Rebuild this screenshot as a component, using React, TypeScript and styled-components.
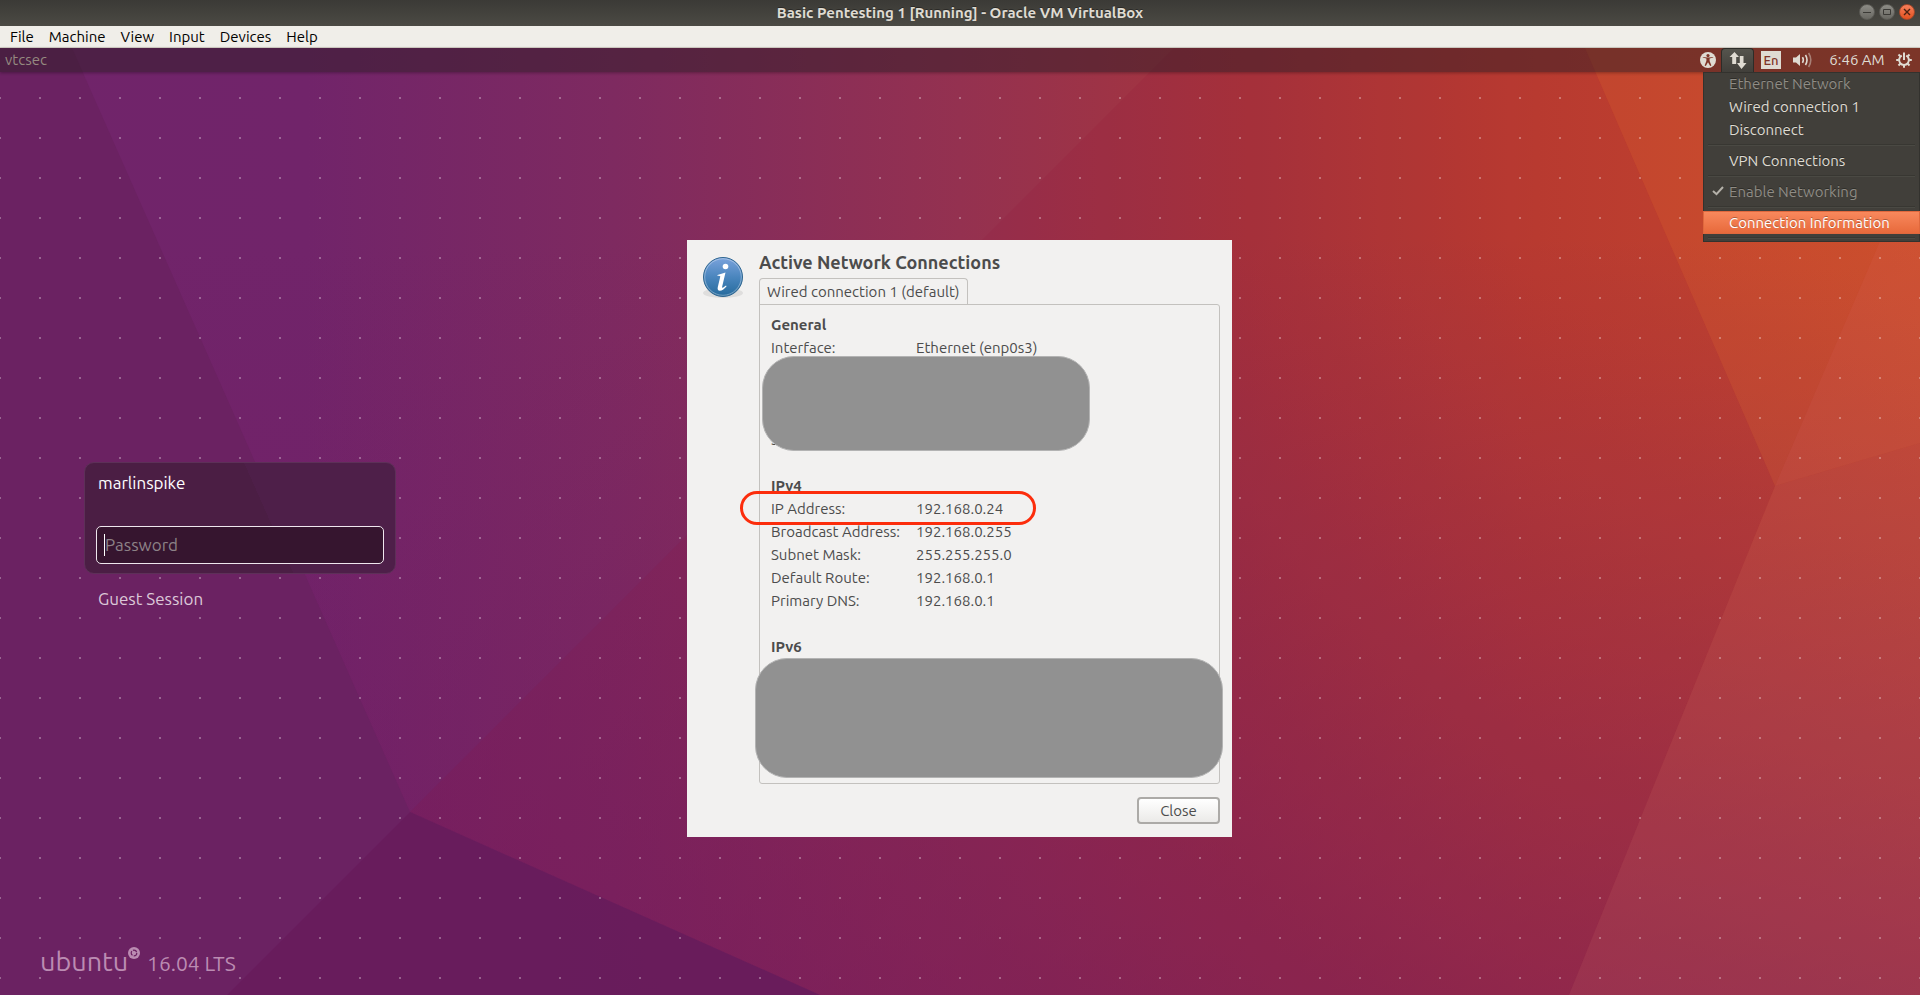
import React from "react";
import styled, { createGlobalStyle } from "styled-components";

const GlobalStyle = createGlobalStyle`
  *, *::before, *::after { box-sizing: border-box; }
  html, body, #root { height: 100%; }
  body {
    margin: 0;
    overflow: hidden;
    background: #6b2262;
    font-family: Ubuntu, "Noto Sans", "Open Sans", sans-serif;
    font-size: 15px;
    line-height: 23px;
  }
  button, input { font: inherit; }
`;

const Window = styled.div`
  display: flex;
  flex-direction: column;
  min-height: 100%;
`;

/* ---------- host window ---------- */

const TitleBar = styled.header`
  display: grid;
  grid-template-columns: 1fr auto 1fr;
  align-items: center;
  height: 26px;
  padding: 0 5px;
  background: linear-gradient(#3b3a36, #4b4a44);
`;

const WindowTitle = styled.h1`
  grid-column: 2;
  margin: 0;
  font-size: 15px;
  font-weight: 700;
  line-height: 24px;
  color: #dfdbd2;
  text-shadow: 0 -1px #2b2a27;
`;

const WindowButtons = styled.div`
  display: flex;
  justify-content: flex-end;
  gap: 4px;
  padding-bottom: 2px;
`;

const RoundButton = styled.button<{ $close?: boolean }>`
  display: grid;
  place-items: center;
  width: 16px;
  height: 16px;
  padding: 0;
  border: 1px solid ${(p) => (p.$close ? "#a5482a" : "#5b5a55")};
  border-radius: 50%;
  background: ${(p) =>
    p.$close ? "linear-gradient(#f7805c, #e2511f)" : "linear-gradient(#8d8c86, #696862)"};
  color: ${(p) => (p.$close ? "#4a2212" : "#3b3a36")};
`;

const MenuBar = styled.nav`
  display: flex;
  gap: 15px;
  height: 22px;
  padding: 0 10px;
  background: #f0eee9;
  border-bottom: 1px solid #d5d1c8;
`;

const MenuButton = styled.button`
  padding: 0;
  border: 0;
  background: none;
  line-height: 21px;
  color: #000;
`;

/* ---------- guest desktop ---------- */

const Guest = styled.main`
  position: relative;
  flex: 1;
  display: flex;
  flex-direction: column;
  isolation: isolate;
`;

const Wallpaper = styled.svg`
  position: absolute;
  inset: 0;
  width: 100%;
  height: 100%;
  z-index: -1;
`;

const Panel = styled.header`
  display: flex;
  justify-content: space-between;
  align-items: stretch;
  height: 24px;
  padding-left: 5px;
  padding-right: 8px;
  background: rgba(44, 28, 36, 0.5);
  box-shadow: 0 1px 3px rgba(0, 0, 0, 0.3);
  line-height: 24px;
`;

const HostName = styled.span`
  color: #958a80;
`;

const Indicators = styled.div`
  display: flex;
  align-items: center;
  color: #dfdbd2;
`;

const Indicator = styled.button<{ $width: number; $open?: boolean }>`
  display: grid;
  place-items: center;
  align-self: stretch;
  width: ${(p) => p.$width}px;
  padding: 0;
  border: ${(p) => (p.$open ? "1px solid #2d2c28" : "0")};
  border-bottom: 0;
  border-radius: 4px 4px 0 0;
  background: ${(p) => (p.$open ? "linear-gradient(#55544d, #413f3a)" : "none")};
  color: inherit;
  white-space: nowrap;
`;

const Keyboard = styled.span`
  width: 20px;
  height: 18px;
  background: #dfdbd2;
  color: #7f3427;
  font-size: 13px;
  font-weight: 500;
  line-height: 18px;
`;

const Desktop = styled.div`
  flex: 1;
  display: grid;
  grid-template-columns: 1fr 546px 1fr;
  align-items: start;
`;

/* ---------- greeter ---------- */

const Greeter = styled.section`
  align-self: stretch;
  display: flex;
  flex-direction: column;
  padding: 390px 20px 16px 84px;
`;

const LoginBox = styled.form`
  display: flex;
  flex-direction: column;
  justify-content: space-between;
  width: 312px;
  height: 112px;
  padding: 8px 11px 9px;
  border: 1px solid #5d3058;
  border-radius: 10px;
  background: linear-gradient(66deg, #4b1e44 58%, #4e1f49 58%);
`;

const UserName = styled.label`
  padding-left: 2px;
  font-size: 17px;
  color: #fff;
`;

const PasswordInput = styled.input`
  width: 100%;
  height: 38px;
  padding: 0 8px 2px;
  border: 1px solid #efe6ee;
  border-radius: 5px;
  background: #36152f;
  font-size: 17px;
  color: #fff;
  caret-color: #fff;
  outline: none;
  &::placeholder { color: #8d8287; opacity: 1; }
`;

const PasswordField = styled.div`
  position: relative;
`;

const Caret = styled.span`
  position: absolute;
  left: 8px;
  top: 8px;
  width: 1px;
  height: 22px;
  background: #fff;
`;

const GuestButton = styled.button`
  align-self: flex-start;
  margin-top: 13px;
  padding: 0 14px;
  border: 0;
  background: none;
  font-size: 17px;
  color: #dcc8d8;
`;

const Brand = styled.div`
  display: flex;
  align-items: baseline;
  margin-top: auto;
  margin-left: -44px;
  color: #bb8cb2;
`;

const BrandName = styled.span`
  font-size: 27px;
  line-height: 36px;
`;

const BrandRing = styled.svg`
  align-self: flex-start;
  margin: 4px 7px 0 0;
`;

const BrandRelease = styled.span`
  font-size: 21px;
`;

/* ---------- network dialog ---------- */

const Dialog = styled.section`
  display: grid;
  grid-template-columns: 56px 1fr;
  width: 545px;
  height: 597px;
  margin-top: 168px;
  padding: 11px 12px 13px 16px;
  background: #f2f1f0;
  color: #4c4c4c;
`;

const InfoIcon = styled.svg`
  margin-top: 4px;
`;

const DialogBody = styled.div`
  display: flex;
  flex-direction: column;
`;

const DialogTitle = styled.h2`
  margin: 0 0 4px;
  font-size: 18px;
  font-weight: 700;
  line-height: 23px;
`;

const Tab = styled.button`
  position: relative;
  align-self: flex-start;
  height: 27px;
  margin-bottom: -1px;
  padding: 0 7px 2px;
  border: 1px solid #c3c1be;
  border-bottom: 0;
  border-radius: 4px 4px 0 0;
  background: #f2f1f0;
  color: inherit;
`;

const TabPanel = styled.div`
  position: relative;
  height: 480px;
  padding: 8px 11px;
  border: 1px solid #c3c1be;
  border-radius: 0 3px 3px 3px;
`;

const SectionTitle = styled.h3`
  margin: 0;
  font-size: 15px;
  font-weight: 700;
  line-height: 23px;
`;

const Details = styled.table`
  border-collapse: collapse;
  margin-bottom: 23px;
  th, td { height: 23px; padding: 0; text-align: left; font-weight: 400; }
  th { width: 145px; }
`;

const RedactedRows = styled.tr`
  height: 69px;
`;

const Redaction = styled.div<{ $wide?: boolean }>`
  position: absolute;
  top: ${(p) => (p.$wide ? 353 : 51)}px;
  left: ${(p) => (p.$wide ? -5 : 2)}px;
  width: ${(p) => (p.$wide ? 468 : 328)}px;
  height: ${(p) => (p.$wide ? 120 : 95)}px;
  border: 1px solid #b3b3b3;
  border-radius: 32px;
  background: #919191;
`;

const Highlight = styled.div`
  position: absolute;
  top: 186px;
  left: -20px;
  width: 296px;
  height: 34px;
  border: 3px solid #fc2d0c;
  border-radius: 17px;
`;

const CloseButton = styled.button`
  align-self: flex-end;
  width: 83px;
  height: 27px;
  margin-top: auto;
  padding: 0;
  border: 2px solid #acaaa7;
  border-radius: 4px;
  background: linear-gradient(#fff, #ebeae8);
  color: inherit;
  line-height: 22px;
`;

/* ---------- network menu ---------- */

const NetworkMenu = styled.div`
  justify-self: end;
  width: 217px;
  background: #413f3a;
  box-shadow: inset 0 0 0 1px #33322e;
  color: #dfdbd2;
`;

const MenuItem = styled.button<{ $active?: boolean }>`
  display: flex;
  align-items: center;
  width: 100%;
  height: 23px;
  padding: 0 0 1px;
  border: 0;
  background: ${(p) => (p.$active ? "linear-gradient(#f98a5e, #e7683a)" : "none")};
  box-shadow: ${(p) => (p.$active ? "inset 0 0 0 1px #e0683d" : "none")};
  color: ${(p) => (p.$active ? "#fff" : "inherit")};
  text-shadow: 0 -1px rgba(0, 0, 0, 0.3);
  &:disabled { color: #8f8c85; }
`;

const CheckColumn = styled.span`
  display: grid;
  place-items: center;
  flex: none;
  width: 26px;
  padding-left: 4px;
`;

const Separator = styled.hr`
  height: 2px;
  margin: 3px 5px;
  border: 0;
  border-top: 1px solid #383732;
  border-bottom: 1px solid #4a4943;
`;

type Entry = { label: string; disabled?: boolean; checked?: boolean; active?: boolean };

const menuGroups: Entry[][] = [
  [{ label: "Ethernet Network", disabled: true }, { label: "Wired connection 1" }, { label: "Disconnect" }],
  [{ label: "VPN Connections" }],
  [{ label: "Enable Networking", disabled: true, checked: true }],
  [{ label: "Connection Information", active: true }],
];

const ipv4: [string, string][] = [
  ["IP Address:", "192.168.0.24"],
  ["Broadcast Address:", "192.168.0.255"],
  ["Subnet Mask:", "255.255.255.0"],
  ["Default Route:", "192.168.0.1"],
  ["Primary DNS:", "192.168.0.1"],
];

const gearTeeth = [45, 90, 135, 180, 225, 270, 315];

function Background() {
  return (
    <Wallpaper viewBox="0 48 1920 947" preserveAspectRatio="none" aria-hidden="true">
      <defs>
        <linearGradient id="base" x1="0" y1="0" x2="1" y2="0">
          <stop offset="0" stopColor="#70246a" />
          <stop offset="0.16" stopColor="#71246a" />
          <stop offset="0.32" stopColor="#7e2a60" />
          <stop offset="0.5" stopColor="#943150" />
          <stop offset="0.65" stopColor="#a7353c" />
          <stop offset="0.8" stopColor="#bd4030" />
          <stop offset="1" stopColor="#cb4d2d" />
        </linearGradient>
        <linearGradient id="low" x1="0" y1="0" x2="0" y2="1">
          <stop offset="0.2" stopColor="#701c64" stopOpacity="0" />
          <stop offset="1" stopColor="#701c64" stopOpacity="0.58" />
        </linearGradient>
        <pattern id="dots" x="39" y="17" width="40" height="40" patternUnits="userSpaceOnUse">
          <rect width="2" height="2" fill="#fff" fillOpacity="0.3" />
        </pattern>
      </defs>
      <rect y="48" width="1920" height="947" fill="url(#base)" />
      <rect y="48" width="1920" height="947" fill="url(#low)" />
      <path d="M0 48H72L410 812L227 995H0Z" fill="#6b2262" />
      <path d="M1174 48L410 812L820 995H1569L1775 486L1585 48Z" fill="#900c30" fillOpacity="0.1" />
      <path d="M410 812L227 995H820Z" fill="#671c5b" fillOpacity="0.9" />
      <path d="M1775 486L1585 48H1920V148Z" fill="#e0602a" fillOpacity="0.12" />
      <path d="M1775 486L1920 148V443Z" fill="#e87050" fillOpacity="0.16" />
      <path d="M1775 486L1920 443V995H1569Z" fill="#d86058" fillOpacity="0.12" />
      <rect y="74" width="1920" height="921" fill="url(#dots)" />
    </Wallpaper>
  );
}

export default function App() {
  return (
    <Window>
      <GlobalStyle />
      <TitleBar>
        <WindowTitle>Basic Pentesting 1 [Running] - Oracle VM VirtualBox</WindowTitle>
        <WindowButtons>
          <RoundButton aria-label="Minimize">
            <svg width="8" height="8" viewBox="0 0 8 8" stroke="currentColor"><path d="M0 4.5H8" /></svg>
          </RoundButton>
          <RoundButton aria-label="Maximize">
            <svg width="8" height="8" viewBox="0 0 8 8" fill="none" stroke="currentColor"><path d="M.5 1.5h7v5h-7z" /></svg>
          </RoundButton>
          <RoundButton $close aria-label="Close window">
            <svg width="8" height="8" viewBox="0 0 8 8" stroke="currentColor" strokeWidth="1.4"><path d="M1 1L7 7M7 1L1 7" /></svg>
          </RoundButton>
        </WindowButtons>
      </TitleBar>
      <MenuBar>
        {["File", "Machine", "View", "Input", "Devices", "Help"].map((m) => (
          <MenuButton key={m}>{m}</MenuButton>
        ))}
      </MenuBar>

      <Guest>
        <Background />
        <Panel>
          <HostName>vtcsec</HostName>
          <Indicators>
            <Indicator $width={26} aria-label="Accessibility">
              <svg width="16" height="16" viewBox="0 0 16 16">
                <circle cx="8" cy="8" r="8" fill="currentColor" />
                <circle cx="8" cy="3.6" r="1.6" fill="#7f3427" />
                <path d="M2.8 5.6L6.4 6.4V9L4.6 13.6L5.8 14L8 10.2L10.2 14L11.4 13.6L9.6 9V6.4L13.2 5.6V4.9L8.8 5.5H7.2L2.8 4.9Z" fill="#7f3427" />
              </svg>
            </Indicator>
            <Indicator $width={33} $open aria-label="Network">
              <svg width="18" height="17" viewBox="0 0 18 17" fill="currentColor">
                <path d="M5.5 0L10 5H7.2V12H3.2V5H0.5ZM12.5 17L17.5 11H14.5V4H10.8V11H8Z" />
              </svg>
            </Indicator>
            <Indicator $width={34} aria-label="Keyboard layout">
              <Keyboard>En</Keyboard>
            </Indicator>
            <Indicator $width={30} aria-label="Sound">
              <svg width="20" height="16" viewBox="0 0 20 16" fill="none" stroke="currentColor" strokeWidth="1.6">
                <path d="M0 5.5H3L7 2V14L3 10.5H0Z" fill="currentColor" stroke="none" />
                <path d="M9.5 5.2Q11.2 8 9.5 10.8" />
                <path d="M12.5 3Q15.5 8 12.5 13" />
                <path d="M15.6 1Q20 8 15.6 15" strokeOpacity="0.45" />
              </svg>
            </Indicator>
            <Indicator $width={78}>6:46 AM</Indicator>
            <Indicator $width={16} aria-label="Session">
              <svg width="16" height="16" viewBox="0 0 16 16" fill="none" stroke="currentColor" strokeWidth="2">
                <path d="M5.8 3.7A4.9 4.9 0 1 0 10.2 3.7" />
                <path d="M8 0.5V8" />
                {gearTeeth.map((a) => (
                  <path key={a} d="M8 0.2V2.8" transform={`rotate(${a} 8 8)`} />
                ))}
              </svg>
            </Indicator>
          </Indicators>
        </Panel>

        <Desktop>
          <Greeter>
            <LoginBox>
              <UserName htmlFor="password">marlinspike</UserName>
              <PasswordField>
                <PasswordInput id="password" type="password" placeholder="Password" />
                <Caret />
              </PasswordField>
            </LoginBox>
            <GuestButton>Guest Session</GuestButton>
            <Brand>
              <BrandName>ubuntu</BrandName>
              <BrandRing width="12" height="12" viewBox="0 0 12 12">
                <circle cx="6" cy="6" r="6" fill="currentColor" />
                <circle cx="6" cy="6" r="2.8" fill="none" stroke="#6b2262" strokeWidth="1.2" strokeDasharray="4.6 1.26" />
              </BrandRing>
              <BrandRelease>16.04 LTS</BrandRelease>
            </Brand>
          </Greeter>

          <Dialog role="dialog" aria-labelledby="dialog-title">
            <InfoIcon width="40" height="44" viewBox="0 0 40 44" aria-hidden="true">
              <defs>
                <linearGradient id="ball" x1="0" y1="0" x2="0" y2="1">
                  <stop offset="0" stopColor="#7ba3dc" />
                  <stop offset="0.5" stopColor="#4a86be" />
                  <stop offset="1" stopColor="#256a9c" />
                </linearGradient>
              </defs>
              <ellipse cx="20" cy="38" rx="20" ry="5" fill="#000" fillOpacity="0.08" />
              <circle cx="20" cy="22" r="19.5" fill="url(#ball)" stroke="#2f6690" />
              <circle cx="20" cy="22" r="18.3" fill="none" stroke="#fff" strokeOpacity="0.35" />
              <circle cx="22.5" cy="11.5" r="2.8" fill="#fff" />
              <path d="M14.5 20L22.5 17.6L19.2 31.5Q18.8 33.4 20.2 32.6L23 30.4L23.6 31.2Q19.8 35.8 16.8 35.8Q14 35.6 14.8 32L17.3 21.6Q17.4 20.6 14.4 20.8Z" fill="#fff" />
            </InfoIcon>
            <DialogBody>
              <DialogTitle id="dialog-title">Active Network Connections</DialogTitle>
              <Tab role="tab" aria-selected="true">Wired connection 1 (default)</Tab>
              <TabPanel role="tabpanel">
                <SectionTitle>General</SectionTitle>
                <Details>
                  <tbody>
                    <tr>
                      <th scope="row">Interface:</th>
                      <td>Ethernet (enp0s3)</td>
                    </tr>
                    <RedactedRows />
                    <tr>
                      <th scope="row">Security:</th>
                      <td />
                    </tr>
                  </tbody>
                </Details>
                <SectionTitle>IPv4</SectionTitle>
                <Details>
                  <tbody>
                    {ipv4.map(([name, value]) => (
                      <tr key={name}>
                        <th scope="row">{name}</th>
                        <td>{value}</td>
                      </tr>
                    ))}
                  </tbody>
                </Details>
                <SectionTitle>IPv6</SectionTitle>
                <Redaction />
                <Redaction $wide />
                <Highlight />
              </TabPanel>
              <CloseButton>Close</CloseButton>
            </DialogBody>
          </Dialog>

          <NetworkMenu role="menu">
            {menuGroups.map((group, i) => (
              <React.Fragment key={i}>
                {group.map((item) => (
                  <MenuItem key={item.label} role="menuitem" disabled={item.disabled} $active={item.active}>
                    <CheckColumn>
                      {item.checked && (
                        <svg width="12" height="10" viewBox="0 0 12 10" fill="none" stroke="#b5b2aa" strokeWidth="2">
                          <path d="M1 5L4.5 8.2L11 1" />
                        </svg>
                      )}
                    </CheckColumn>
                    {item.label}
                  </MenuItem>
                ))}
                <Separator />
              </React.Fragment>
            ))}
          </NetworkMenu>
        </Desktop>
      </Guest>
    </Window>
  );
}
